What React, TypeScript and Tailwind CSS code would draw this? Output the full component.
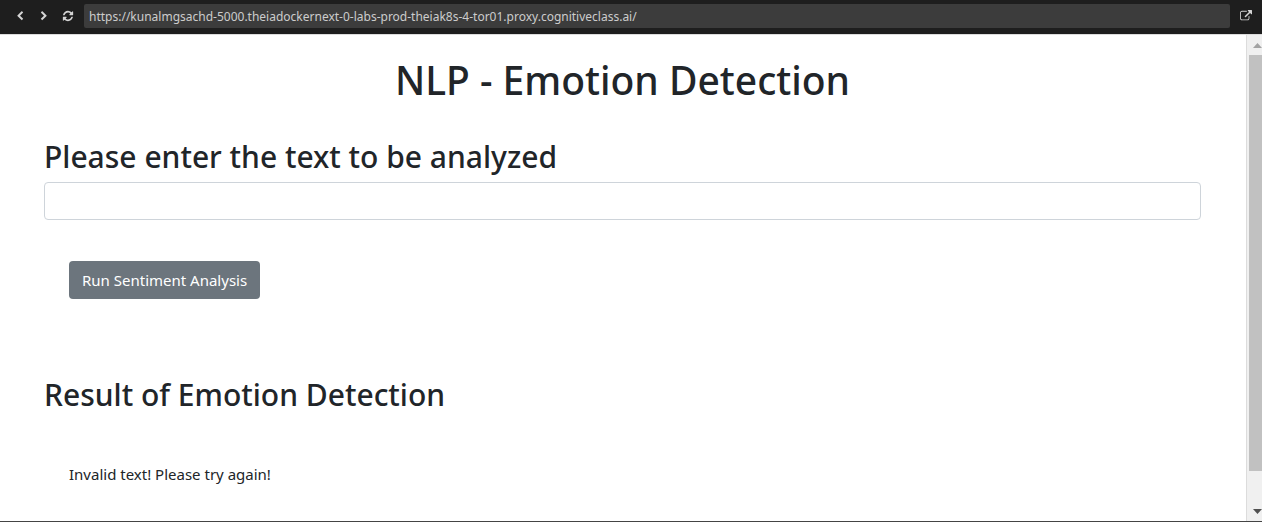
import { useState } from "react";

const CHEVRON_LEFT =
  "M1427 301l-531 531 531 531q19 19 19 45t-19 45l-166 166q-19 19-45 19t-45-19l-742-742q-19-19-19-45t19-45l742-742q19-19 45-19t45 19l166 166q19 19 19 45t-19 45z";
const REFRESH =
  "M1639 1056q0 5-1 7-64 268-268 434.5t-478 166.5q-146 0-282.5-55t-243.5-157l-129 129q-19 19-45 19t-45-19-19-45v-448q0-26 19-45t45-19h448q26 0 45 19t19 45-19 45l-137 137q71 66 161 102t187 36q134 0 250-65t186-179q11-17 53-117 8-23 30-23h192q13 0 22.5 9.5t9.5 22.5zm25-800v448q0 26-19 45t-45 19h-448q-26 0-45-19t-19-45 19-45l138-138q-148-137-349-137-134 0-250 65t-186 179q-11 17-53 117-8 23-30 23h-199q-13 0-22.5-9.5t-9.5-22.5v-7q65-268 270-434.5t480-166.5q146 0 284 55.5t245 156.5l130-129q19-19 45-19t45 19 19 45z";
const EXTERNAL =
  "M1408 928v320q0 119-84.5 203.5t-203.5 84.5h-832q-119 0-203.5-84.5t-84.5-203.5v-832q0-119 84.5-203.5t203.5-84.5h704q14 0 23 9t9 23v64q0 14-9 23t-23 9h-704q-66 0-113 47t-47 113v832q0 66 47 113t113 47h832q66 0 113-47t47-113v-320q0-14 9-23t23-9h64q14 0 23 9t9 23zm384-864v512q0 26-19 45t-45 19-45-19l-176-176-652 652q-10 10-23 10t-23-10l-114-114q-10-10-10-23t10-23l652-652-176-176q-19-19-19-45t19-45 45-19h512q26 0 45 19t19 45z";

function Icon({ d, className }: { d: string; className: string }) {
  return (
    <svg viewBox="0 0 1792 1792" fill="currentColor" className={className} aria-hidden="true">
      <path d={d} />
    </svg>
  );
}

function Toolbar() {
  const [url, setUrl] = useState(
    "https://kunalmgsachd-5000.theiadockernext-0-labs-prod-theiak8s-4-tor01.proxy.cognitiveclass.ai/",
  );
  return (
    <header className="flex h-[34px] shrink-0 items-start bg-[#1e1e1e] py-1 text-[#d4d4d4]">
      <nav className="flex h-6 w-[84px] shrink-0 items-center pl-2">
        <button type="button" aria-label="Back" className="flex w-6 justify-center">
          <Icon d={CHEVRON_LEFT} className="size-[10px]" />
        </button>
        <button type="button" aria-label="Forward" className="flex w-6 justify-center">
          <Icon d={CHEVRON_LEFT} className="size-[10px] -scale-x-100" />
        </button>
        <button type="button" aria-label="Reload" className="flex w-6 justify-center">
          <Icon d={REFRESH} className="size-3" />
        </button>
      </nav>
      <input
        type="text"
        aria-label="Address"
        value={url}
        onChange={(e) => setUrl(e.target.value)}
        className="h-6 min-w-0 flex-1 rounded-xs bg-[#3c3c3c] px-[5px] text-[12px] text-[#cccccc] outline-none"
      />
      <button type="button" aria-label="Open in new window" className="flex h-6 w-8 shrink-0 items-center justify-center">
        <Icon d={EXTERNAL} className="size-3" />
      </button>
    </header>
  );
}

function Scrollbar() {
  return (
    <div className="flex w-4 shrink-0 flex-col border-l border-[#dcdcdc] bg-[#f0f0f0] pl-0.5" aria-hidden="true">
      <div className="flex h-5 shrink-0 items-center justify-end">
        <svg viewBox="0 0 9 5" className="h-[5px] w-[9px] fill-[#a3a3a3]">
          <path d="M0 5 4.5 0 9 5z" />
        </svg>
      </div>
      <div className="grow-[416] basis-0 bg-[#c1c1c1]" />
      <div className="grow-[30] basis-0" />
      <div className="flex h-5 shrink-0 items-center justify-end">
        <svg viewBox="0 0 9 5" className="h-[5px] w-[9px] fill-[#505050]">
          <path d="M0 0h9L4.5 5z" />
        </svg>
      </div>
    </div>
  );
}

export default function App() {
  const [text, setText] = useState("");
  const [result, setResult] = useState("Invalid text! Please try again!");
  return (
    <div className="flex min-h-screen flex-col border-b border-[#444444] bg-white font-['Noto_Sans',sans-serif] text-[#212529]">
      <Toolbar />
      <div className="flex flex-1 border-t border-[#dcdcdc]">
        <main className="min-w-0 flex-1 pt-[21px] pr-[45px] pl-11">
          <h1 className="text-center text-[39px] leading-[48px] font-medium">NLP - Emotion Detection</h1>
          <form
            onSubmit={(e) => {
              e.preventDefault();
              setResult("Invalid text! Please try again!");
            }}
          >
            <label htmlFor="text-to-analyze" className="mt-[34px] block text-[30px] leading-[38px] font-medium">
              Please enter the text to be analyzed
            </label>
            <input
              id="text-to-analyze"
              type="text"
              value={text}
              onChange={(e) => setText(e.target.value)}
              className="mt-[6px] block h-[38px] w-full rounded border border-[#ced4da] px-3 text-[15px] outline-none"
            />
            <button
              type="submit"
              className="mt-[41px] ml-[25px] h-[38px] rounded bg-[#6c757d] px-[13px] text-[15px] text-white"
            >
              Run Sentiment Analysis
            </button>
          </form>
          <h2 className="mt-[77px] text-[30px] leading-[38px] font-medium">Result of Emotion Detection</h2>
          <p className="mt-12 ml-[25px] text-[15px] leading-6">{result}</p>
        </main>
        <Scrollbar />
      </div>
    </div>
  );
}
